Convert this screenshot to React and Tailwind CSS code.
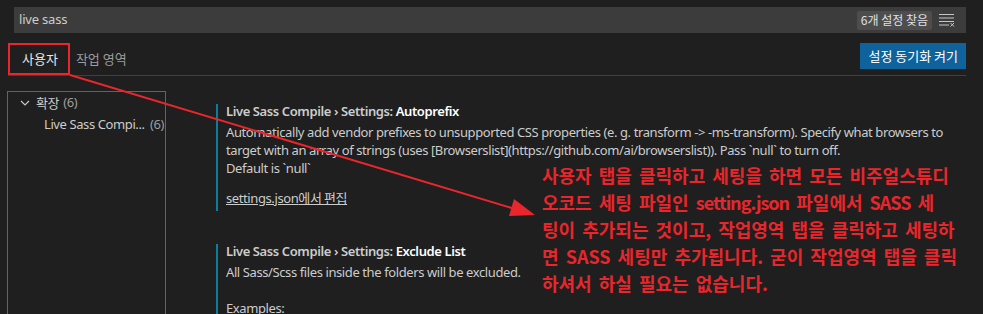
import React from "react";

const UI = { fontFamily: '"Noto Sans", "Noto Sans CJK KR", sans-serif' };
const KR = { fontFamily: '"Noto Sans CJK KR", "Noto Sans", sans-serif' };

function ClearIcon() {
  return (
    <svg width="17" height="14" viewBox="0 0 17 14" className="block">
      <g stroke="#c5c5c5" strokeWidth="1">
        <line x1="0" y1="1.5" x2="15" y2="1.5" />
        <line x1="0" y1="5" x2="15" y2="5" />
        <line x1="0" y1="8.5" x2="15" y2="8.5" />
        <line x1="0" y1="12" x2="10" y2="12" />
        <line x1="11.5" y1="10" x2="15" y2="13.5" />
        <line x1="15" y1="10" x2="11.5" y2="13.5" />
      </g>
    </svg>
  );
}

function Chevron() {
  return (
    <svg width="10" height="10" viewBox="0 0 10 10" className="block">
      <polyline points="1,3 5,7 9,3" fill="none" stroke="#c5c5c5" strokeWidth="1.2" />
    </svg>
  );
}

export default function App() {
  return (
    <div className="relative w-[983px] h-[314px] overflow-hidden bg-[#1f1f1f] text-[#cccccc]" style={UI}>
      {/* search */}
      <div className="pt-[7px] pl-[14px] pr-[17px]">
        <div className="h-[26px] bg-[#3c3c3c] flex items-center pl-[5px] pr-[10px]">
          <span className="text-[13px] text-[#cccccc] flex-1 tracking-[-0.2px]">live sass</span>
          <span className="h-[19px] px-[4px] rounded-[2px] bg-[#4d4d4d] text-[12px] text-[#e0e0e0] flex items-center leading-none" style={KR}>6개 설정 찾음</span>
          <span className="ml-[7px]"><ClearIcon /></span>
        </div>
      </div>
      {/* tabs */}
      <div className="mt-[10px] ml-[8px] mr-[17px] h-[33px] border-b border-[#3f3f3f] flex items-start">
        <div className="h-[32px] flex items-center pl-[14px] gap-[18px] text-[13px]" style={KR}>
          <span className="text-[#e7e7e7]">사용자</span>
          <span className="text-[#9d9d9d]">작업 영역</span>
        </div>
        <div className="ml-auto h-[26px] px-[8px] bg-[#0e639c] text-white text-[13px] flex items-center" style={KR}>설정 동기화 켜기</div>
      </div>
      {/* body */}
      <div className="flex mt-[15px]">
        <div className="ml-[7px] w-[159px] h-[240px] border border-[#007fd4] text-[13px] tracking-[-0.4px]">
          <div className="h-[22px] flex items-center pl-[12px]">
            <Chevron />
            <span className="ml-[6px] text-[#cccccc]" style={KR}>확장</span>
            <span className="ml-[4px] text-[#9d9d9d]">(6)</span>
          </div>
          <div className="h-[22px] flex items-center pl-[36px] pr-[1px]">
            <span className="text-[#cccccc] whitespace-nowrap">Live Sass Compi...</span>
            <span className="ml-auto text-[#9d9d9d]">(6)</span>
          </div>
        </div>
        <div className="ml-[50px] mt-[13px] flex flex-col gap-[33px] text-[13px] tracking-[-0.4px]">
          <div className="border-l-2 border-[#0c7d9d] pl-[8px] pb-[4px]">
            <div className="h-[14px] leading-[14px] font-semibold whitespace-nowrap">
              <span className="text-[#cccccc]">Live Sass Compile › Settings: </span>
              <span className="text-white">Autoprefix</span>
            </div>
            <div className="mt-[5px] leading-[18px] whitespace-nowrap text-[#cccccc]">
              <div>Automatically add vendor prefixes to unsupported CSS properties (e. g. transform -&gt; -ms-transform). Specify what browsers to</div>
              <div>target with an array of strings (uses [Browserslist](https://github.com/ai/browserslist)). Pass `null` to turn off.</div>
              <div>Default is `null`</div>
            </div>
            <div className="mt-[12px] leading-[18px] underline text-[#cccccc]">settings.json<span style={KR}>에서 편집</span></div>
          </div>
          <div className="border-l-2 border-[#0c7d9d] pl-[8px] h-[80px]">
            <div className="h-[14px] leading-[14px] font-semibold whitespace-nowrap">
              <span className="text-[#cccccc]">Live Sass Compile › Settings: </span>
              <span className="text-white">Exclude List</span>
            </div>
            <div className="mt-[5px] leading-[18px] whitespace-nowrap text-[#cccccc]">
              <div>All Sass/Scss files inside the folders will be excluded.</div>
              <div>&nbsp;</div>
              <div>Examples:</div>
            </div>
          </div>
        </div>
      </div>

      {/* annotations */}
      <div className="absolute left-[8px] top-[43px] w-[62px] h-[32px] border-2 border-[#e8262b]" />
      <svg className="absolute left-0 top-0 pointer-events-none" width="983" height="314">
        <line x1="70" y1="75" x2="520" y2="210.5" stroke="#e8262b" strokeWidth="2" />
        <polygon points="535,215 509,216 514,199" fill="#e8262b" />
      </svg>
      <div className="absolute left-[542px] top-[162px] text-[18px] leading-[27px] font-bold text-[#e8262b] whitespace-nowrap [word-spacing:3px]" style={KR}>
        <div>사용자 탭을 클릭하고 세팅을 하면 모든 비주얼스튜디</div>
        <div>오코드 세팅 파일인 <span className="tracking-[-1px]">setting.json</span> 파일에서 <span className="tracking-[-1px]">SASS</span> 세</div>
        <div>팅이 추가되는 것이고, 작업영역 탭을 클릭하고 세팅하</div>
        <div>면 SASS 세팅만 추가됩니다. 굳이 작업영역 탭을 클릭</div>
        <div>하셔서 하실 필요는 없습니다.</div>
      </div>
    </div>
  );
}
